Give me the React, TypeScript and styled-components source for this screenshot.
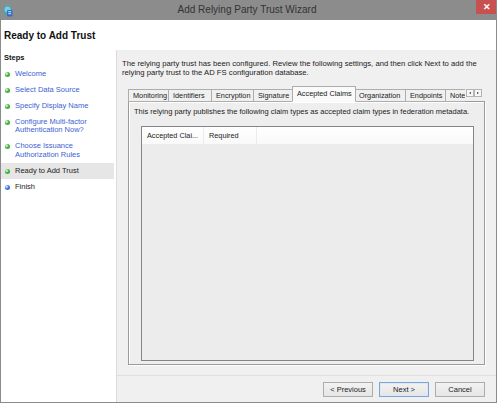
import React from 'react';
import styled, { createGlobalStyle } from 'styled-components';

const GlobalStyle = createGlobalStyle`
  html, body {
    margin: 0;
    padding: 0;
    background: #fff;
  }
  body {
    font-family: "Liberation Sans", Arial, sans-serif;
    color: #1e1e1e;
  }
`;

const Window = styled.div`
  width: 497px;
  height: 403px;
  box-sizing: border-box;
  display: flex;
  flex-direction: column;
  border: 1px solid #8b8b8b;
  border-top: none;
  background: #fff;
  overflow: hidden;
`;

const TitleBar = styled.div`
  height: 20px;
  margin: 0 -1px;
  background: #8c8c8c;
  display: flex;
  align-items: flex-start;
  flex-shrink: 0;
`;

const AppIcon = styled.div`
  width: 14px;
  height: 20px;
  padding: 3px 0 0 3px;
  box-sizing: border-box;
`;

const TitleText = styled.div`
  flex: 1;
  text-align: center;
  font-size: 10px;
  line-height: 20px;
  color: #333;
  padding-left: 4px;
`;

const CloseButton = styled.div`
  width: 21px;
  height: 14px;
  background: #c75050;
  color: #fff;
  font-size: 9px;
  font-weight: bold;
  line-height: 14px;
  text-align: center;
`;

const Header = styled.div`
  height: 30px;
  display: flex;
  align-items: center;
  padding-left: 3px;
  font-size: 10px;
  font-weight: bold;
  color: #111;
  flex-shrink: 0;
`;

const Body = styled.div`
  flex: 1;
  display: flex;
  min-height: 0;
`;

const Sidebar = styled.div`
  width: 115px;
  border-right: 1px solid #dcdcdc;
  background: #fff;
  flex-shrink: 0;
`;

const StepsTitle = styled.div`
  height: 16px;
  line-height: 16px;
  padding-left: 3px;
  font-size: 7.5px;
  font-weight: bold;
  color: #111;
`;

const StepList = styled.ul`
  list-style: none;
  margin: 0;
  padding: 0;
`;

const StepItem = styled.li<{ $current?: boolean; $link?: boolean }>`
  display: flex;
  align-items: flex-start;
  padding: 3.75px 0;
  margin-right: 2px;
  background: ${(p) => (p.$current ? '#e6e6e6' : 'transparent')};
  font-size: 7.5px;
  line-height: 8.5px;
  color: ${(p) => (p.$link ? '#3d5fd2' : '#222')};
`;

const Dot = styled.span<{ $color: string }>`
  width: 5px;
  height: 5px;
  border-radius: 50%;
  margin: 2px 5px 0 4px;
  flex-shrink: 0;
  background: radial-gradient(circle at 35% 35%, #fff 0, ${(p) => p.$color} 45%);
`;

const Main = styled.div`
  flex: 1;
  display: flex;
  flex-direction: column;
  background: #f0f0f0;
  min-width: 0;
`;

const Description = styled.p`
  margin: 10px 4px 0 5px;
  font-size: 7.7px;
  line-height: 8.5px;
  color: #222;
`;

const TabControl = styled.div`
  margin: 10px 11px 0 11px;
  display: flex;
  flex-direction: column;
`;

const TabStrip = styled.div`
  height: 15px;
  display: flex;
  align-items: flex-end;
  position: relative;
  z-index: 1;
  margin-bottom: -1px;
`;

const TabList = styled.div`
  flex: 1;
  min-width: 0;
  display: flex;
  align-items: flex-end;
  overflow: hidden;
`;

const Tab = styled.div<{ $active?: boolean; $width: number }>`
  flex-shrink: 0;
  width: ${(p) => p.$width + (p.$active ? 2 : 0)}px;
  height: ${(p) => (p.$active ? '16px' : '13px')};
  line-height: ${(p) => (p.$active ? '13px' : '12px')};
  box-sizing: border-box;
  padding: 0 0 0 4px;
  margin-left: ${(p) => (p.$active ? '-1px' : '0')};
  margin-right: ${(p) => (p.$active ? '-1px' : '0')};
  border: 1px solid #adadad;
  border-bottom: ${(p) => (p.$active ? '1px solid #fafafa' : '1px solid #adadad')};
  border-left-width: ${(p) => (p.$active ? '1px' : '0')};
  background: ${(p) => (p.$active ? '#fafafa' : '#f0f0f0')};
  font-size: 7.3px;
  color: #222;
  white-space: nowrap;
  overflow: hidden;
  position: relative;
  z-index: ${(p) => (p.$active ? 2 : 1)};

  &:first-child {
    border-left-width: 1px;
  }
`;

const ScrollButtons = styled.div`
  display: flex;
  align-self: flex-start;
  margin: 2px 3px 0 1px;
`;

const ScrollButton = styled.div`
  width: 8px;
  height: 8px;
  box-sizing: border-box;
  border: 1px solid #b5b5b5;
  background: #f7f7f7;
  display: flex;
  align-items: center;
  justify-content: center;
`;

const Arrow = styled.span<{ $dir: 'left' | 'right' }>`
  width: 0;
  height: 0;
  border-top: 1.5px solid transparent;
  border-bottom: 1.5px solid transparent;
  ${(p) =>
    p.$dir === 'left'
      ? 'border-right: 2px solid #333;'
      : 'border-left: 2px solid #333;'}
`;

const TabPanel = styled.div`
  height: 264px;
  box-sizing: border-box;
  border: 1px solid #9a9a9a;
  box-shadow: inset 1px 1px 0 #fff, 1px 1px 0 #fff;
  background: #eeeeee;
  display: flex;
  flex-direction: column;
  padding: 5px 10px 3px 12px;
`;

const PanelText = styled.div`
  font-size: 7.5px;
  line-height: 9px;
  color: #222;
  margin-left: -7px;
`;

const ListBox = styled.div`
  flex: 1;
  margin-top: 10px;
  border: 1px solid #858585;
  background: #ececec;
  display: flex;
  flex-direction: column;
`;

const ListHeader = styled.div`
  height: 17px;
  display: flex;
  background: linear-gradient(#fff, #f9f9f9);
`;

const Column = styled.div<{ $width: number }>`
  width: ${(p) => p.$width}px;
  box-sizing: border-box;
  padding-left: 5px;
  font-size: 7.3px;
  line-height: 17px;
  color: #222;
  border-right: 1px solid #ececec;
  white-space: nowrap;
  overflow: hidden;
`;

const Footer = styled.div`
  margin-top: 10px;
  border-top: 1px solid #dfdfdf;
  flex: 1;
  display: flex;
  justify-content: flex-end;
  align-items: flex-start;
  gap: 6px;
  padding: 6px 11px 0 0;
`;

const Button = styled.button<{ $default?: boolean }>`
  width: 50px;
  height: 15px;
  padding: 0;
  font-family: "Liberation Sans", Arial, sans-serif;
  font-size: 7.5px;
  color: #222;
  border: 1px solid ${(p) => (p.$default ? '#7aa7d6' : '#adadad')};
  background: linear-gradient(#f2f2f2, #e6e6e6);
  box-shadow: ${(p) => (p.$default ? 'inset 0 0 0 1px #dbe8f6' : 'none')};
`;

const steps: { label: string[]; color: string; link?: boolean; current?: boolean }[] = [
  { label: ['Welcome'], color: '#3cb03c', link: true },
  { label: ['Select Data Source'], color: '#3cb03c', link: true },
  { label: ['Specify Display Name'], color: '#3cb03c', link: true },
  { label: ['Configure Multi-factor', 'Authentication Now?'], color: '#3cb03c', link: true },
  { label: ['Choose Issuance', 'Authorization Rules'], color: '#3cb03c', link: true },
  { label: ['Ready to Add Trust'], color: '#3cb03c', current: true },
  { label: ['Finish'], color: '#3b6fdc' },
];

const tabs = [
  { label: 'Monitoring', width: 41 },
  { label: 'Identifiers', width: 43 },
  { label: 'Encryption', width: 42 },
  { label: 'Signature', width: 39 },
  { label: 'Accepted Claims', width: 62 },
  { label: 'Organization', width: 51 },
  { label: 'Endpoints', width: 40 },
  { label: 'Notes', width: 30 },
];

const WizardIcon = () => (
  <svg width="10" height="12" viewBox="0 0 10 12">
    <rect x="0.5" y="0.5" width="8" height="9" rx="1.5" fill="#4fa3a0" />
    <circle cx="4.5" cy="4.5" r="3" fill="#7ec8e8" />
    <rect x="4" y="5" width="5.5" height="6.5" rx="1" fill="#2e6fc4" />
    <rect x="5.2" y="6.2" width="3" height="1" fill="#cfe6ff" />
    <rect x="5.2" y="8.2" width="3" height="1" fill="#cfe6ff" />
  </svg>
);

const App: React.FC = () => {
  return (
    <>
      <GlobalStyle />
      <Window>
        <TitleBar>
          <AppIcon>
            <WizardIcon />
          </AppIcon>
          <TitleText>Add Relying Party Trust Wizard</TitleText>
          <CloseButton>✕</CloseButton>
        </TitleBar>
        <Header>Ready to Add Trust</Header>
        <Body>
          <Sidebar>
            <StepsTitle>Steps</StepsTitle>
            <StepList>
              {steps.map((s) => (
                <StepItem key={s.label[0]} $current={s.current} $link={s.link}>
                  <Dot $color={s.color} />
                  <span>
                    {s.label.map((line, i) => (
                      <React.Fragment key={line}>
                        {i > 0 && <br />}
                        {line}
                      </React.Fragment>
                    ))}
                  </span>
                </StepItem>
              ))}
            </StepList>
          </Sidebar>
          <Main>
            <Description>
              The relying party trust has been configured. Review the following settings, and then
              click Next to add the relying party trust to the AD FS configuration database.
            </Description>
            <TabControl>
              <TabStrip>
                <TabList>
                  {tabs.map((t) => (
                    <Tab key={t.label} $width={t.width} $active={t.label === 'Accepted Claims'}>
                      {t.label}
                    </Tab>
                  ))}
                </TabList>
                <ScrollButtons>
                  <ScrollButton>
                    <Arrow $dir="left" />
                  </ScrollButton>
                  <ScrollButton>
                    <Arrow $dir="right" />
                  </ScrollButton>
                </ScrollButtons>
              </TabStrip>
              <TabPanel>
                <PanelText>
                  This relying party publishes the following claim types as accepted claim types in
                  federation metadata.
                </PanelText>
                <ListBox>
                  <ListHeader>
                    <Column $width={62}>Accepted Clai...</Column>
                    <Column $width={53}>Required</Column>
                  </ListHeader>
                </ListBox>
              </TabPanel>
            </TabControl>
            <Footer>
              <Button>&lt; Previous</Button>
              <Button $default>Next &gt;</Button>
              <Button>Cancel</Button>
            </Footer>
          </Main>
        </Body>
      </Window>
    </>
  );
};

export default App;
